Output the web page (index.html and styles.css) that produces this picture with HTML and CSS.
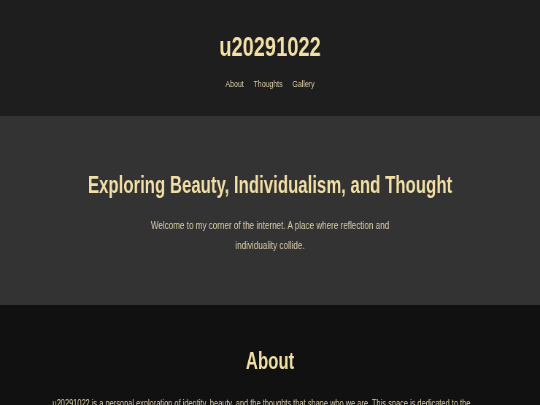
FILE: index.html
```html
<!DOCTYPE html>
<html lang="en">
<head>
<meta charset="utf-8">
<title>u20291022</title>
<link rel="stylesheet" href="styles.css">
</head>
<body>
<div class="frame">
<div class="page">
  <header class="site-header">
    <h1 class="site-title">u20291022</h1>
    <nav class="site-nav">
      <a href="#about">About</a>
      <a href="#thoughts">Thoughts</a>
      <a href="#gallery">Gallery</a>
    </nav>
  </header>
  <section class="hero">
    <h2 class="hero-title">Exploring Beauty, Individualism, and Thought</h2>
    <p class="hero-text">Welcome to my corner of the internet. A place where reflection and individuality collide.</p>
  </section>
  <section class="about" id="about">
    <h2 class="about-title">About</h2>
    <p class="about-text">u20291022 is a personal exploration of identity, beauty, and the thoughts that shape who we are. This space is dedicated to the celebration of individuality and the quiet moments of reflection.</p>
  </section>
</div>
</div>
</body>
</html>
```
FILE: styles.css
```css
* { box-sizing: border-box; }
html, body { margin: 0; padding: 0; }
html { overflow-x: hidden; }
body {
  background: #111111;
}
.frame {
  width: 100%;
  overflow: hidden;
}
.page {
  width: 740px;
  transform: scaleX(0.7297);
  transform-origin: 0 0;
  will-change: transform;
  font-family: "Liberation Sans", Arial, sans-serif;
  color: #d9cfa9;
}
.site-header {
  background: #1e1e1e;
  height: 116px;
  padding-top: 31px;
  text-align: center;
}
.site-title {
  margin: 0;
  font-size: 27.5px;
  line-height: 32px;
  font-weight: bold;
  color: #f2dfa6;
}
.site-nav {
  margin-top: 15px;
  display: flex;
  justify-content: center;
  gap: 13.7px;
  font-size: 9.5px;
  line-height: 12px;
}
.site-nav a {
  color: #ddd2ab;
  text-decoration: none;
}
.hero {
  background: #333333;
  height: 189px;
  padding-top: 55px;
  text-align: center;
}
.hero-title {
  margin: 0;
  font-size: 23px;
  line-height: 28px;
  font-weight: bold;
  color: #f2dfa6;
}
.hero-text {
  margin: 16px auto 0;
  max-width: 370px;
  font-size: 11.1px;
  line-height: 20px;
}
.about {
  padding-top: 42px;
}
.about-title {
  margin: 0;
  text-align: center;
  font-size: 23px;
  line-height: 28px;
  font-weight: bold;
  color: #f2dfa6;
}
.about-text {
  margin: 19px auto 0;
  max-width: 596px;
  text-align: left;
  font-size: 10.2px;
  line-height: 20px;
}
```
